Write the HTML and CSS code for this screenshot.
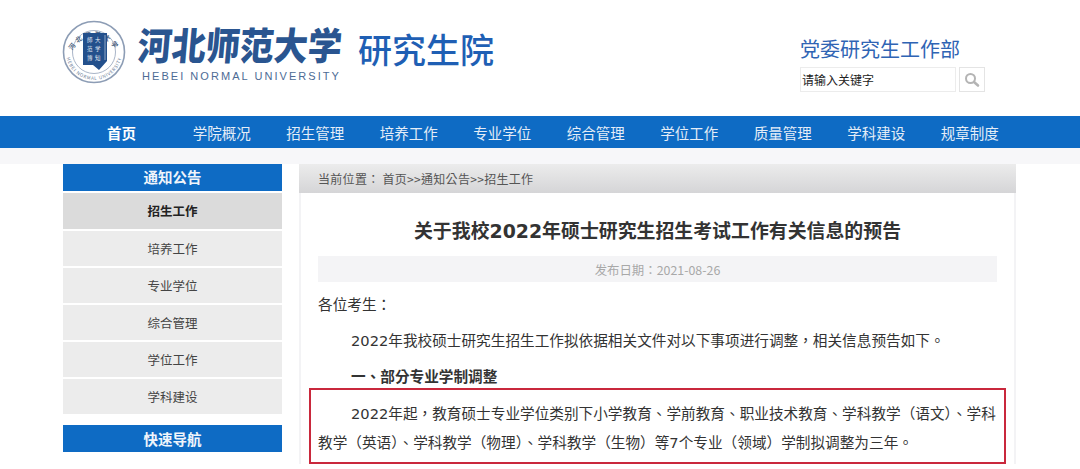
FILE: index.html
```html
<!DOCTYPE html>
<html lang="zh-CN">
<head>
    <meta charset="UTF-8">
    <meta name="viewport" content="width=device-width, initial-scale=1.0">
    <title>河北师范大学研究生院</title>
    <link rel="stylesheet" href="styles.css">
</head>
<body>
    <!-- Header -->
    <div class="header">
        <div class="logo">
            <svg class="seal" width="66" height="66" viewBox="0 0 66 66">
                <defs>
                    <path id="arcTop" d="M9.5 37 A24 24 0 0 1 56.5 37"/>
                    <path id="arcBottom" d="M5 36 A28.2 28.2 0 0 0 61 36"/>
                </defs>
                <circle cx="33" cy="33" r="30.5" fill="#fff" stroke="#8d9db5" stroke-width="1.6"/>
                <circle cx="33" cy="33" r="21.5" fill="#fff" stroke="#a9b5c8" stroke-width="1"/>
                <text class="seal-cn"><textPath href="#arcTop" startOffset="50%" text-anchor="middle">河北师范大学</textPath></text>
                <text class="seal-en"><textPath href="#arcBottom" startOffset="50%" text-anchor="middle">HEBEI NORMAL UNIVERSITY</textPath></text>
                <path d="M22 14 H46 V42 L38 51 L32 46 H22 Z" fill="#23508c"/>
                <path d="M44 16 V41" stroke="#8fa6c6" stroke-width="1"/>
                <text class="seal-mark" x="26" y="23">師大</text>
                <text class="seal-mark" x="26" y="32">范学</text>
                <text class="seal-mark" x="26" y="41">博知</text>
            </svg>
            <div class="logo-name">
                <div class="logo-cn">河北师范大学</div>
                <div class="logo-en">HEBEI NORMAL UNIVERSITY</div>
            </div>
            <div class="logo-dept">研究生院</div>
        </div>
        <div class="head-right">
            <div class="head-title">党委研究生工作部</div>
            <div class="search">
                <div class="search-input">请输入关键字</div>
                <div class="search-btn">
                    <svg width="16" height="16" viewBox="0 0 16 16">
                        <circle cx="6.5" cy="6.5" r="4.5" fill="none" stroke="#b4b4b4" stroke-width="2"/>
                        <path d="M10 10 L14 13.5" stroke="#b4b4b4" stroke-width="2.6" stroke-linecap="round"/>
                    </svg>
                </div>
            </div>
        </div>
    </div>

    <!-- Nav -->
    <div class="nav">
        <a class="nav-home">首页</a>
        <a>学院概况</a>
        <a>招生管理</a>
        <a>培养工作</a>
        <a>专业学位</a>
        <a>综合管理</a>
        <a>学位工作</a>
        <a>质量管理</a>
        <a>学科建设</a>
        <a>规章制度</a>
    </div>
    <div class="strip"></div>

    <div class="content">
        <div class="side">
            <div class="side-title">通知公告</div>
            <div class="side-list">
                <div class="side-item active">招生工作</div>
                <div class="side-item">培养工作</div>
                <div class="side-item">专业学位</div>
                <div class="side-item">综合管理</div>
                <div class="side-item">学位工作</div>
                <div class="side-item">学科建设</div>
            </div>
            <div class="side-title quick">快速导航</div>
        </div>

        <!-- zh-TW gives the centred punctuation the original shows -->
        <div class="main" lang="zh-TW">
            <div class="crumb">当前位置： 首页&gt;&gt;通知公告&gt;&gt;招生工作</div>
            <div class="article">
                <h1>关于我校2022年硕士研究生招生考试工作有关信息的预告</h1>
                <div class="date">发布日期：2021-08-26</div>
                <p>各位考生：</p>
                <p class="indent">2022年我校硕士研究生招生工作拟依据相关文件对以下事项进行调整，相关信息预告如下。</p>
                <p class="indent"><b>一、部分专业学制调整</b></p>
                <div class="mark">
                    <p class="indent">2022年起，教育硕士专业学位类别下小学教育、学前教育、职业技术教育、学科教学（语文）、学科教学（英语）、学科教学（物理）、学科教学（生物）等7个专业（领域）学制拟调整为三年。</p>
                </div>
            </div>
        </div>
    </div>
</body>
</html>
```

FILE: styles.css
```css
html, body {
    margin: 0;
    padding: 0;
    height: 469px;
    overflow: hidden;
    background: #fff;
    font-family: "Noto Sans CJK SC", "Noto Sans", sans-serif;
}

/* header */
.header {
    height: 116px;
    display: flex;
    justify-content: space-between;
    padding: 0 95px 0 61px;
    box-sizing: border-box;
}

.logo {
    display: flex;
    align-items: flex-start;
}

.seal {
    margin-top: 19px;
    flex: none;
}

.seal-cn {
    font-size: 6.5px;
    font-weight: 700;
    fill: #4a5f80;
    letter-spacing: 2.5px;
}

.seal-en {
    font-size: 4.6px;
    fill: #6d7e98;
    letter-spacing: 0.7px;
}

.seal-mark {
    font-size: 5.5px;
    fill: #e8eef7;
    letter-spacing: 2.5px;
}

.logo-name {
    margin-left: 11px;
    width: 206px;
}

.logo-cn {
    margin-top: 19px;
    height: 50px;
    line-height: 50px;
    font-size: 34px;
    font-weight: 900;
    color: #2a5590;
    white-space: nowrap;
    transform: skewX(-5deg) scaleY(1.12);
}

.logo-en {
    margin: 0 0 0 4px;
    font-family: "Liberation Sans", sans-serif;
    font-size: 11px;
    line-height: 14px;
    letter-spacing: 2.05px;
    color: #4d6b95;
    white-space: nowrap;
}

.logo-dept {
    margin: 26px 0 0 14px;
    font-size: 34px;
    font-weight: 500;
    line-height: 46px;
    color: #1f5fb4;
}

.head-right {
    width: 185px;
    padding-top: 35px;
}

.head-title {
    font-size: 20px;
    line-height: 28px;
    color: #2f64b4;
}

.search {
    display: flex;
    gap: 3px;
    margin-top: 4px;
}

.search-input {
    width: 156px;
    height: 25px;
    box-sizing: border-box;
    border: 1px solid #ececec;
    padding-left: 1px;
    font-size: 12px;
    line-height: 23px;
    color: #222;
}

.search-btn {
    width: 26px;
    height: 25px;
    box-sizing: border-box;
    border: 1px solid #e4e4e4;
    display: flex;
    align-items: center;
    justify-content: center;
}

/* nav */
.nav {
    height: 32px;
    background: #0e6bc4;
    display: flex;
    padding-left: 68px;
}

.nav a {
    flex: 0 0 93.5px;
    text-align: center;
    font-size: 14.5px;
    line-height: 34px;
    color: #e4edf7;
}

.nav a.nav-home {
    flex-basis: 107px;
    font-weight: 700;
    color: #fff;
}

.strip {
    height: 16px;
    background: #f7f7f9;
}

/* two columns */
.content {
    display: flex;
    padding-left: 63px;
    gap: 17px;
}

.side {
    width: 219px;
    flex: none;
}

.side-title {
    height: 27px;
    line-height: 26px;
    background: #0e6bc4;
    color: #f0f5fb;
    font-size: 14.5px;
    font-weight: 700;
    text-align: center;
}

.side-title.quick {
    margin-top: 11px;
    line-height: 27px;
}

.side-list {
    margin-top: 2px;
}

.side-item {
    height: 35px;
    line-height: 36px;
    margin-bottom: 2px;
    background: #ececec;
    color: #444;
    font-size: 12.5px;
    text-align: center;
}

.side-item.active {
    height: 36px;
    background: #dbdbdb;
    color: #222;
    font-weight: 700;
}

.main {
    width: 713px;
    border-left: 2px solid #f3f3f5;
    border-right: 2px solid #f3f3f5;
}

.crumb {
    height: 29px;
    line-height: 29px;
    margin: 0 -2px;
    padding-left: 19px;
    background: linear-gradient(#ececec, #d5d5d7);
    font-family: "Noto Sans CJK TC", sans-serif;
    font-size: 12px;
    letter-spacing: 0.3px;
    color: #555;
}

.article {
    padding: 0 17px;
    color: #333;
    font-family: "DejaVu Sans", "Noto Sans CJK TC", sans-serif;
}

h1 {
    margin: 0;
    padding-top: 22px;
    height: 41px;
    line-height: 32px;
    font-size: 18.9px;
    font-weight: 700;
    text-align: center;
    color: #333;
}

.date {
    height: 26px;
    line-height: 28px;
    background: #f4f4f6;
    text-align: center;
    font-family: "Noto Sans CJK TC", sans-serif;
    font-size: 12.4px;
    color: #a8a8a8;
}

p {
    margin: 0 0 7px;
    font-size: 14.65px;
    line-height: 29px;
}

.article > p:first-of-type {
    margin-top: 8px;
}

.indent {
    text-indent: 33px;
}

.mark {
    margin: -10px -9px 0 -9px;
    padding: 9px 5px 5px 7px;
    border: 2px solid #c9283c;
}

.mark p {
    margin: 0;
}
```
